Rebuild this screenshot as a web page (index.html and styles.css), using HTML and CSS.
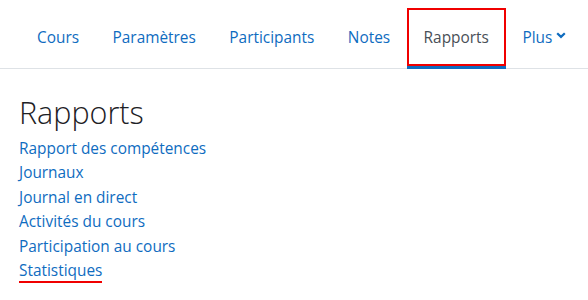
FILE: index.html
```html
<!DOCTYPE html>
<html lang="fr">
<head>
<meta charset="utf-8">
<title>Rapports</title>
<link rel="stylesheet" href="styles.css">
</head>
<body>
<nav class="tabs">
  <a class="tab" href="#">Cours</a>
  <a class="tab" href="#">Paramètres</a>
  <a class="tab" href="#">Participants</a>
  <a class="tab" href="#">Notes</a>
  <a class="tab tab-active" href="#">Rapports</a>
  <a class="tab tab-more" href="#">Plus<svg class="chev" viewBox="0 0 10 7" width="10" height="7"><path d="M1.2 1.2 L5 4.9 L8.8 1.2" fill="none" stroke="currentColor" stroke-width="2.2"/></svg></a>
</nav>
<main class="content">
  <h2 class="title">Rapports</h2>
  <ul class="reports">
    <li><a href="#">Rapport des compétences</a></li>
    <li><a href="#">Journaux</a></li>
    <li><a href="#">Journal en direct</a></li>
    <li><a href="#">Activités du cours</a></li>
    <li><a href="#">Participation au cours</a></li>
    <li><a class="marked" href="#">Statistiques</a></li>
  </ul>
</main>
</body>
</html>
```
FILE: styles.css
```css
html, body {
  margin: 0;
  padding: 0;
  background: #fff;
}
body {
  font-family: "Open Sans", "Noto Sans", sans-serif;
  font-size: 15.4px;
  color: #1d2125;
}
a {
  color: #0f6cbf;
  text-decoration: none;
}
.tabs {
  display: flex;
  align-items: flex-start;
  padding: 8px 0 0 20px;
  height: 60px;
  border-bottom: 1px solid #dee2e6;
}
.tab {
  display: flex;
  align-items: center;
  height: 58px;
  padding: 0 17px;
  border-bottom: 3px solid transparent;
  box-sizing: content-box;
  white-space: nowrap;
}
.tab + .tab {
  margin-left: -0.5px;
}
.tab-active {
  color: #495057;
  border-bottom-color: #0f6cbf;
  box-shadow: inset 0 0 0 2px #f00000;
}
.chev {
  margin-left: 4px;
  margin-top: -3px;
}
.content {
  padding: 0 19px;
}
.title {
  margin: 23px 0 0;
  font-size: 30.5px;
  font-weight: 300;
  line-height: 40px;
  color: #1d2125;
}
.reports {
  list-style: none;
  margin: 5px 0 0;
  padding: 0;
  line-height: 24.4px;
}
.marked {
  display: inline-block;
  line-height: 20px;
  border-bottom: 2px solid #f00000;
}
```
